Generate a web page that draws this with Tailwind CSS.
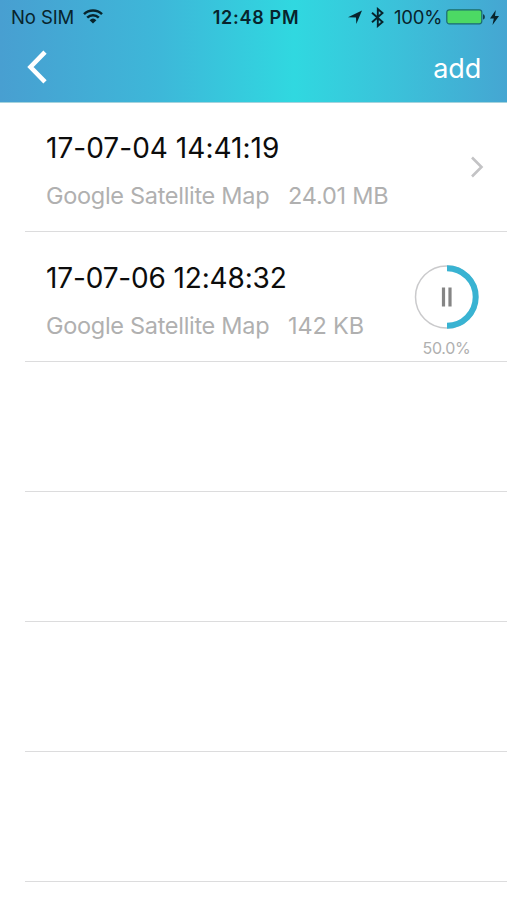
<!DOCTYPE html>
<html lang="en">
<head>
<meta charset="utf-8">
<title>Offline maps</title>
<script src="https://cdn.jsdelivr.net/npm/@tailwindcss/browser@4"></script>
</head>
<body class="bg-white font-['Inter','Liberation_Sans',sans-serif]">
<div class="w-[507px] h-[900px] overflow-hidden bg-white">
  <header class="h-[103px] bg-[linear-gradient(90deg,#489fd1_0%,#3db8d9_32%,#30d8e0_58%,#3cbfd9_80%,#45a6d2_100%)] border-b border-[#a5d3dd]">
    <div class="h-[34px] grid grid-cols-3 items-center text-[#08242c] text-[18.5px] leading-[33px] whitespace-nowrap">
      <div class="flex items-center pl-[11px]">
        <span class="w-[72px] tracking-[-0.1px]">No SIM</span>
        <svg class="w-[20px] h-[15px] -mt-[1px]" viewBox="0 0 20 15" fill="none" stroke="currentColor" stroke-width="2.5"><path d="M1 5.2a13 13 0 0 1 18 0M4.2 8.6a8.4 8.4 0 0 1 11.6 0"/><path d="M6.6 11.2a5 5 0 0 1 6.8 0L10 14.6z" fill="currentColor" stroke="none"/></svg>
      </div>
      <div class="pt-[1px] pl-[5px] text-center font-semibold text-[18px] tracking-[0.7px]">12:48 PM</div>
      <div class="flex items-center pl-[10px]">
        <svg class="w-[14px] h-[15px] shrink-0" viewBox="0 0 14 15" fill="currentColor"><path d="M14 .5 8.300 14 8 7.600 0 7.200z"/></svg>
        <svg class="w-[13px] h-[21px] ml-[9px] shrink-0" viewBox="0 0 13 20" fill="none" stroke="currentColor" stroke-width="1.9"><path d="M1 5.300 11.500 14.500 6.800 18.500V1.500l4.700 4L1 14.700"/></svg>
        <span class="ml-[10px] w-[52px] tracking-[-0.2px]">100%</span>
        <svg class="w-[41px] h-[16px] shrink-0" viewBox="0 0 41 16"><rect x=".8" y=".8" width="35" height="14" rx="2.500" fill="#4cd964" stroke="#1b6a70" stroke-width="1.200"/><path d="M37.200 5.200c2 .3 2 5 0 5.300z" fill="#08242c"/></svg>
        <svg class="w-[9px] h-[15px] ml-[3px] shrink-0" viewBox="0 0 9 15" fill="currentColor"><path d="M5.800 0 0 8.500h3.800L2.500 15 9 6H5z"/></svg>
      </div>
    </div>
    <div class="h-[66px] flex justify-between items-center pl-[27px] pr-[26px] text-white">
      <svg class="w-[21px] h-[34px]" viewBox="0 0 21 34" fill="none" stroke="currentColor" stroke-width="4.600"><path d="M18 2.200 3.500 17 18 31.800"/></svg>
      <span class="pt-[4px] text-[27px] leading-[34px] tracking-[-0.2px]">add</span>
    </div>
  </header>
  <main class="pl-[25px]">
    <div class="h-[129px] border-b border-[#dcdcdd] flex justify-between pl-[21px] pr-[23px]">
      <div class="pt-[28px] whitespace-nowrap">
        <div class="text-[28px] leading-[34px] text-[#0c0c0c] tracking-[0.03px]">17-07-04 14:41:19</div>
        <div class="mt-[17px] flex text-[23.500px] leading-[28px] text-[#b0b0b0] tracking-[-0.2px]"><span class="w-[242px] tracking-[-0.300px]">Google Satellite Map</span><span>24.01 MB</span></div>
      </div>
      <svg class="w-[14px] h-[22px] mt-[53px]" viewBox="0 0 14 22" fill="none" stroke="#c3c3c5" stroke-width="2.600"><path d="M2 1.500 11.500 11 2 20.500"/></svg>
    </div>
    <div class="h-[130px] border-b border-[#dcdcdd] flex justify-between pl-[21px] pr-[28px]">
      <div class="pt-[29px] whitespace-nowrap">
        <div class="text-[28px] leading-[34px] text-[#0c0c0c] tracking-[-0.15px]">17-07-06 12:48:32</div>
        <div class="mt-[17px] flex text-[23.500px] leading-[28px] text-[#b0b0b0] tracking-[-0.15px]"><span class="w-[242px] tracking-[-0.300px]">Google Satellite Map</span><span>142 KB</span></div>
      </div>
      <div class="pt-[33px] w-[65px] flex flex-col items-center text-[#b0b0b0]">
        <svg class="w-[65px] h-[65px]" viewBox="0 0 65 65" fill="none"><circle cx="32.500" cy="32" r="31" stroke="#cacacc" stroke-width="1.500"/><path d="M33 3.300a28.700 28.700 0 0 1 0 57.400" stroke="#39b3d2" stroke-width="6"/><path d="M29.500 22.500v19M36 22.500v19" stroke="#858585" stroke-width="3.200"/></svg>
        <span class="mt-[8px] text-[16px] leading-[20px] tracking-[-0.300px]">50.0%</span>
      </div>
    </div>
    <div class="h-[130px] border-b border-[#dcdcdd]"></div>
    <div class="h-[130px] border-b border-[#dcdcdd]"></div>
    <div class="h-[130px] border-b border-[#dcdcdd]"></div>
    <div class="h-[130px] border-b border-[#dcdcdd]"></div>
  </main>
</div>
</body>
</html>
